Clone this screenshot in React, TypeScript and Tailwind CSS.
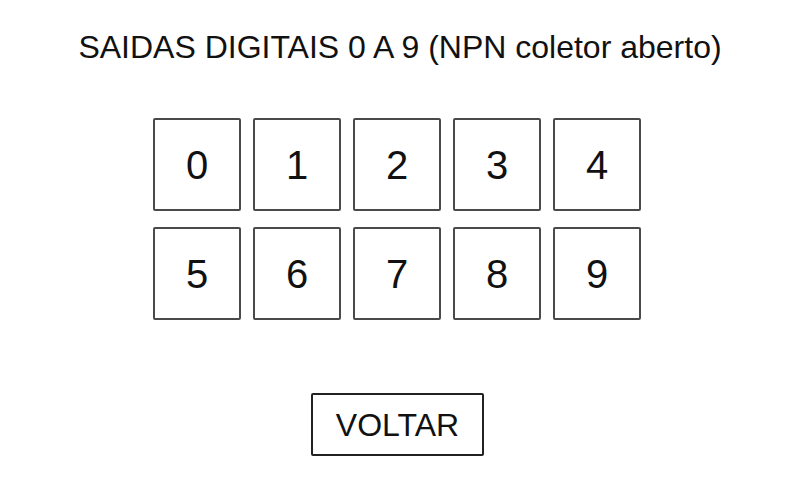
import React from 'react';

const outputs = [0, 1, 2, 3, 4, 5, 6, 7, 8, 9];

export default function App() {
  return (
    <div
      className="flex h-[480px] w-[800px] flex-col items-center bg-white text-[#111]"
      style={{ fontFamily: '"Liberation Sans", Arial, sans-serif' }}
    >
      <h1 className="mt-[29px] text-[32px] leading-[36px] font-normal">
        SAIDAS DIGITAIS 0 A 9 (NPN coletor aberto)
      </h1>
      <div className="mt-[53px] mr-[6px] grid grid-cols-5 gap-x-[12px] gap-y-[16px]">
        {outputs.map((n) => (
          <button
            key={n}
            className="flex h-[93px] w-[88px] items-center justify-center rounded-[2px] border-2 border-[#4a4a4a] bg-white text-[40px] leading-none"
          >
            {n}
          </button>
        ))}
      </div>
      <button className="mt-[73px] mr-[5px] flex h-[63px] w-[173px] items-center justify-center rounded-[2px] border-2 border-[#222] bg-white text-[32px] leading-none">
        VOLTAR
      </button>
    </div>
  );
}
